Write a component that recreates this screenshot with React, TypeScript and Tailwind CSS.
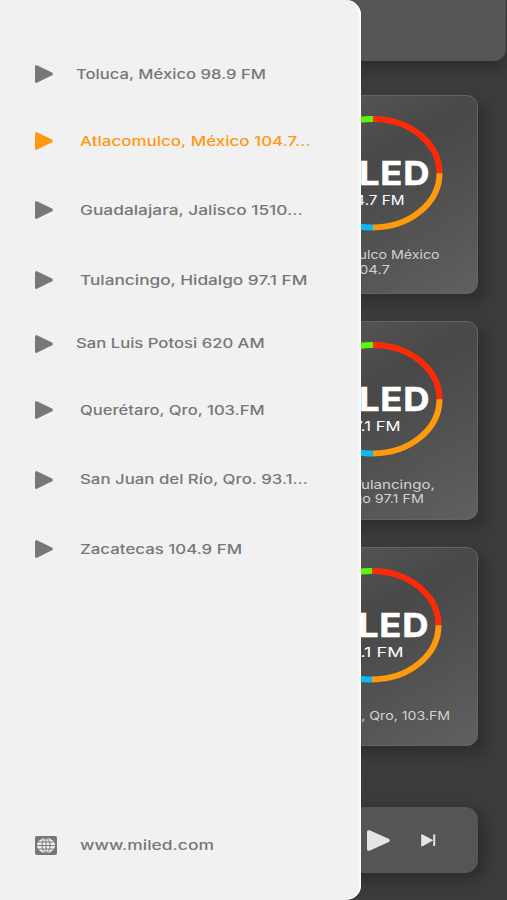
import { useLayoutEffect, useRef, useState } from "react";

/** Single-line label whose glyphs are stretched horizontally to a given width. */
function Stretch({ width, className = "", children }: { width: number; className?: string; children: string }) {
  const ref = useRef<HTMLSpanElement>(null);
  const [scale, setScale] = useState(1);
  useLayoutEffect(() => {
    if (ref.current) setScale(width / ref.current.offsetWidth);
  }, [width, children]);
  return (
    <span className={`block whitespace-nowrap ${className}`} style={{ width }}>
      <span ref={ref} className="inline-block origin-left" style={{ transform: `scaleX(${scale})` }}>
        {children}
      </span>
    </span>
  );
}

function Play({ className = "" }: { className?: string }) {
  return (
    <svg viewBox="0 0 18 18" preserveAspectRatio="none" className={`shrink-0 ${className}`} fill="currentColor">
      <path d="M1.9 0.3 17 7.6Q18.7 9 17 10.3L1.9 17.8Q0 18.2 0 16.5V1.5Q0 -0.2 1.9 0.3Z" />
    </svg>
  );
}

const stations = [
  { name: "Toluca, México 98.9 FM", width: 189.5, row: "mt-[64px] gap-[23px]", tone: "text-[#777]" },
  { name: "Atlacomulco, México 104.7...", width: 230, row: "mt-[47px] gap-[27px]", tone: "text-[#ff9911]" },
  { name: "Guadalajara, Jalisco 1510...", width: 222.5, row: "mt-[49px] gap-[27px]", tone: "text-[#777]" },
  { name: "Tulancingo, Hidalgo 97.1 FM", width: 228, row: "mt-[50px] gap-[27px]", tone: "text-[#777]" },
  { name: "San Luis Potosi 620 AM", width: 188.5, row: "mt-[43.5px] gap-[23px]", tone: "text-[#777]" },
  { name: "Querétaro, Qro, 103.FM", width: 185, row: "mt-[46.5px] gap-[27px]", tone: "text-[#777]" },
  { name: "San Juan del Río, Qro. 93.1...", width: 227.5, row: "mt-[49.5px] gap-[27px]", tone: "text-[#777]" },
  { name: "Zacatecas 104.9 FM", width: 162, row: "mt-[49.5px] gap-[27px]", tone: "text-[#777]" },
];

function Logo({ frequency, width }: { frequency: string; width: number }) {
  return (
    <svg viewBox="0 0 142 116" className="h-[116px] w-[142px] shrink-0" fill="none" strokeWidth="6">
      <path d="M72 4A66.5 54.2 0 0 1 138.5 58.2" stroke="#ff2a05" />
      <path d="M138.5 58.2A66.5 54.2 0 0 1 72 112.4" stroke="#ff9a0c" />
      <path d="M72 112.4A67 54.2 0 0 1 4 58.2" stroke="#10b8f8" />
      <path d="M4 58.2A67 54.2 0 0 1 72 4" stroke="#5cf50c" />
      <g fill="#fff" stroke="none" fontFamily="Inter, sans-serif">
        <g stroke="#fff" strokeWidth="0.5">
          <text
            x="12"
            y="70"
            fontSize="33"
            fontWeight="700"
            letterSpacing="0.8"
            textLength="117.5"
            lengthAdjust="spacingAndGlyphs"
          >
            MILED
          </text>
        </g>
        <text x={71 - width / 2} y="89.5" fontSize="13.5" textLength={width} lengthAdjust="spacingAndGlyphs">
          {frequency}
        </text>
      </g>
    </svg>
  );
}

type Line = { text: string; width: number };
type CardData = { frequency: string; fw: number; lines: Line[]; logo: string; caption: string };

const cards: CardData[] = [
  {
    frequency: "104.7 FM",
    fw: 65,
    lines: [
      { text: "Atlacomulco México", width: 136 },
      { text: "104.7", width: 37 },
    ],
    logo: "pt-[19px]",
    caption: "pt-[17px]",
  },
  {
    frequency: "97.1 FM",
    fw: 57,
    lines: [
      { text: "Miled Tulancingo,", width: 126 },
      { text: "Hidalgo 97.1 FM", width: 105 },
    ],
    logo: "pt-[19px]",
    caption: "pt-[20.5px]",
  },
  {
    frequency: "93.1 FM",
    fw: 65,
    lines: [{ text: "Querétaro, Qro, 103.FM", width: 156 }],
    logo: "pt-[19px] pr-px",
    caption: "pt-[26px]",
  },
];

function Card({ card }: { card: CardData }) {
  return (
    <div className="flex h-[199px] w-[213px] flex-col items-center rounded-[11px] border border-[#646464] bg-[linear-gradient(150deg,#5c5c5c_0%,#484848_40%,#505050_62%,#606060_100%)] shadow-[8px_8px_16px_rgba(0,0,0,0.25)]">
      <div className={card.logo}>
        <Logo frequency={card.frequency} width={card.fw} />
      </div>
      <div className={`flex flex-col items-center text-[12px] leading-[14.5px] text-[#d2d2d2] ${card.caption}`}>
        {card.lines.map((line) => (
          <Stretch key={line.text} width={line.width}>
            {line.text}
          </Stretch>
        ))}
      </div>
    </div>
  );
}

export default function App() {
  return (
    <div className="relative h-[900px] w-[507px] overflow-hidden bg-[#3c3c3c] font-[Inter,sans-serif]">
      <div className="flex h-full flex-col">
        <header className="h-[61px] w-[506px] shrink-0 rounded-b-[12px] bg-[#555] shadow-[0_5px_18px_rgba(0,0,0,0.35)]" />
        <main className="mt-[34px] flex flex-col items-end gap-[27px] pr-[29px]">
          {cards.map((card) => (
            <Card key={card.frequency} card={card} />
          ))}
        </main>
        <footer className="mx-[29px] mt-[61px] flex h-[66px] items-center rounded-[13px] bg-[#555] pl-[338px] text-[#e5e5e5] shadow-[5px_5px_18px_rgba(0,0,0,0.35)]">
          <Play className="h-[21px] w-[23px]" />
          <svg viewBox="0 0 15 13" className="ml-[31px] h-[13px] w-[15px]" fill="currentColor">
            <path d="M1.6 0.5 12.3 6.2 1.6 12.3Q0.2 12.8 0.2 11.7V1.2Q0.2 0 1.6 0.5Z" />
            <path d="M12.2 0.5H14.2V12H12.2Z" />
          </svg>
        </footer>
      </div>

      <aside className="absolute inset-y-0 left-0 flex w-[361px] flex-col rounded-r-[15px] bg-[#f1f1f1] pl-[35px] shadow-[inset_-1.5px_0_1px_#fff]">
        {stations.map((s) => (
          <div key={s.name} className={`flex h-5 shrink-0 items-center ${s.row} ${s.tone}`}>
            <Play className="h-[18px] w-[18px]" />
            <Stretch width={s.width} className="-mt-px text-[13px] leading-5 font-medium">
              {s.name}
            </Stretch>
          </div>
        ))}
        <div className="mt-auto mb-[45px] flex h-5 items-center gap-[23px] text-[#777]">
          <svg viewBox="0 0 22 19" className="h-[19px] w-[22px] shrink-0">
            <rect width="22" height="19" rx="2" fill="#777" />
            <ellipse cx="11" cy="9.5" rx="9" ry="7.4" fill="#f1f1f1" />
            <g fill="none" stroke="#777" strokeWidth="1">
              <ellipse cx="11" cy="9.5" rx="4" ry="7.4" />
              <path d="M11 2.5v14M2.5 9.5h17M3.5 6h15M3.5 13h15" />
            </g>
          </svg>
          <Stretch width={134} className="text-[13px] leading-5 font-medium">
            www.miled.com
          </Stretch>
        </div>
      </aside>
    </div>
  );
}
